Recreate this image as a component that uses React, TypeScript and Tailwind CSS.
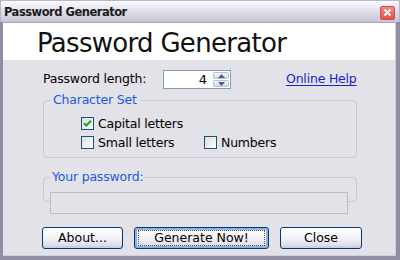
import React from "react";

const font = { fontFamily: '"DejaVu Sans", Verdana, sans-serif' };

function Check({ checked }: { checked?: boolean }) {
  return (
    <span className="w-[13px] h-[13px] border border-[#1c5180] bg-gradient-to-br from-[#dcdcd7] to-[#ffffff] flex items-center justify-center shrink-0">
      {checked && (
        <svg width="9" height="9" viewBox="0 0 9 9">
          <path d="M1 4.2 L3.3 6.6 L8 1.8" stroke="#21a121" strokeWidth="2.1" fill="none" />
        </svg>
      )}
    </span>
  );
}

function Btn({ children, w, focus }: { children: React.ReactNode; w: string; focus?: boolean }) {
  return (
    <div
      className={`${w} h-[22px] rounded-[3px] border border-[#003c74] bg-gradient-to-b from-[#ffffff] via-[#f2f1f6] to-[#d8d6e2] flex items-center justify-center text-[12.5px] text-black ${
        focus ? "shadow-[inset_0_0_0_2px_#8eb0e6]" : "shadow-[inset_0_-2px_0_#cfcde0]"
      }`}
    >
      {focus ? (
        <span className="w-[calc(100%-6px)] h-[16px] border border-dotted border-[#555] flex items-center justify-center">
          {children}
        </span>
      ) : (
        children
      )}
    </div>
  );
}

export default function App() {
  return (
    <div className="w-[400px] h-[260px] flex flex-col bg-[#9a99ad]" style={font}>
      {/* title bar */}
      <div className="h-[22px] flex items-center justify-between bg-gradient-to-b from-[#fbfbfd] to-[#c5c4d6] pl-[3px] pr-[4px] border-x border-t border-[#b8b7c8]">
        <span className="text-[11.5px] font-bold text-[#1a1a1a] tracking-[-0.5px] pt-[2px]">Password Generator</span>
        <div className="w-[15px] h-[14px] rounded-[2px] bg-gradient-to-b from-[#f08a80] to-[#e0554a] border border-[#d24a40] flex items-center justify-center mt-[2px]">
          <svg width="9" height="9" viewBox="0 0 9 9">
            <path d="M1.5 1.5 L7.5 7.5 M7.5 1.5 L1.5 7.5" stroke="#fff" strokeWidth="2" />
          </svg>
        </div>
      </div>
      {/* body with frame */}
      <div className="flex-1 flex border-l-[3px] border-r-[4px] border-b-[4px] border-l-[#8f8ea3] border-r-[#8f8ea3] border-b-[#8f8ea3]">
        <div className="flex-1 flex flex-col bg-[#e3e2e8] border-r border-b border-[#d0cfdb]">
          {/* white header */}
          <div className="h-[38px] bg-white border-t border-[#a9a8b8] flex items-center pl-[34px]">
            <span className="text-[26px] text-[#111] tracking-[-0.7px] leading-none pt-[2px]">Password Generator</span>
          </div>
          {/* content */}
          <div className="flex flex-col pl-[40px] text-[12.5px] text-black">
            <div className="flex items-center mt-[10px] h-[19px]">
              <span className="w-[120px] tracking-[-0.2px]">Password length:</span>
              <div className="w-[68px] h-[19px] border border-[#7f9db9] bg-white flex items-center justify-end pr-[1px]">
                <span className="mr-[6px] text-[13px]">4</span>
                <div className="w-[16px] h-[15px] flex flex-col gap-[1px]">
                  <div className="flex-1 rounded-[2px] border border-[#b6c0d4] bg-gradient-to-b from-[#f4f6fb] to-[#d4dae8] flex items-center justify-center">
                    <svg width="7" height="4" viewBox="0 0 7 4"><path d="M0 4 L3.5 0 L7 4 Z" fill="#4d6185" /></svg>
                  </div>
                  <div className="flex-1 rounded-[2px] border border-[#b6c0d4] bg-gradient-to-b from-[#f4f6fb] to-[#d4dae8] flex items-center justify-center">
                    <svg width="7" height="4" viewBox="0 0 7 4"><path d="M0 0 L3.5 4 L7 0 Z" fill="#4d6185" /></svg>
                  </div>
                </div>
              </div>
              <span className="ml-[55px] text-[#1f1fd0] underline underline-offset-[2px] tracking-[-0.2px]">Online Help</span>
            </div>

            <fieldset className="w-[314px] h-[66px] mt-[3px] border border-[#c9c8cf] rounded-[4px] p-0 m-0">
              <legend className="ml-[6px] px-[3px] text-[#1b5ae0] tracking-[-0.2px] leading-[16px]">Character Set</legend>
              <div className="pl-[37px] leading-[13px]">
                <div className="flex items-center gap-[4px] mt-[9px] h-[13px]">
                  <Check checked />
                  <span className="tracking-[-0.2px]">Capital letters</span>
                </div>
                <div className="flex items-center mt-[6px] h-[13px]">
                  <div className="flex items-center gap-[4px] w-[123px]">
                    <Check />
                    <span className="tracking-[-0.2px]">Small letters</span>
                  </div>
                  <div className="flex items-center gap-[4px]">
                    <Check />
                    <span className="tracking-[-0.2px]">Numbers</span>
                  </div>
                </div>
              </div>
            </fieldset>

            <fieldset className="w-[314px] h-[33px] mt-[11px] border border-[#c9c8cf] rounded-[4px] p-0 m-0">
              <legend className="ml-[6px] px-[2px] text-[#1b5ae0] tracking-[-0.2px] leading-[16px]">Your password:</legend>
              <div className="w-[298px] h-[22px] mt-[7px] ml-[6px] border border-[#bdbcc4] bg-[#e3e2e8]" />
            </fieldset>

            <div className="flex mt-[25px] ml-[-1px]">
              <Btn w="w-[81px]">About...</Btn>
              <div className="ml-[11px]">
                <Btn w="w-[135px]" focus>Generate Now!</Btn>
              </div>
              <div className="ml-[11px]">
                <Btn w="w-[82px]">Close</Btn>
              </div>
            </div>
          </div>
        </div>
      </div>
    </div>
  );
}
